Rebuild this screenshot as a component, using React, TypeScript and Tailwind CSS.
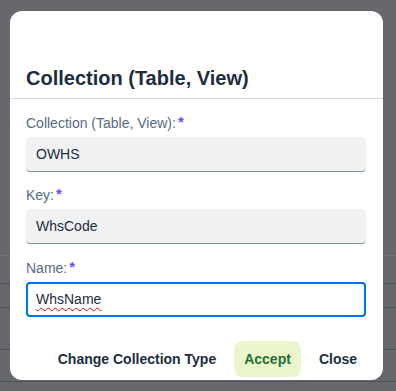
import React from 'react';

const Label: React.FC<{ text: string; className?: string }> = ({ text, className = '' }) => (
  <div className={`h-[20px] leading-[20px] text-[14px] text-[#556b82] flex items-center ${className}`}>
    <span>{text}</span>
    <span className="ml-[2px] font-bold text-[#6c4cf5] text-[15px] leading-[20px] -mt-[2px]">*</span>
  </div>
);

const ReadField: React.FC<{ value: string }> = ({ value }) => (
  <div className="mt-[4px] h-[35px] rounded-[4px] bg-[#eff1f2] border-b border-[#7d93a9] pl-[10px] flex items-center text-[14px] text-[#1d2d3e]">
    {value}
  </div>
);

export default function App() {
  return (
    <div className="relative w-[396px] h-[391px] overflow-hidden bg-[#66686b] font-['Liberation_Sans',Arial,sans-serif]">
      {/* page behind the block layer */}
      <div className="flex flex-col">
        <div className="h-[256px] border-b border-[#727478]" />
        <div className="h-[28px] border-b border-[#4d525a]" />
        <div className="h-[24px] border-b border-[#4d525a]" />
        <div className="h-[42px] border-b border-[#4d525a]" />
        <div className="h-[32px] border-b border-[#4d525a]" />
      </div>

      {/* dialog */}
      <div className="absolute left-[10px] top-[11px] w-[373px] h-[369px] bg-white rounded-[12px] overflow-hidden flex flex-col">
        <div className="pl-[16px] pt-[55px] pb-[8px] border-b border-[#d9d9d9]">
          <h1 className="text-[20px] leading-[24px] font-bold text-[#1d2d3e]">Collection (Table, View)</h1>
        </div>

        <div className="pl-[16px] pr-[17px] pt-[14px]">
          <Label text="Collection (Table, View):" />
          <ReadField value="OWHS" />

          <Label text="Key:" className="mt-[13px]" />
          <ReadField value="WhsCode" />

          <Label text="Name:" className="mt-[14px]" />
          <div className="mt-[4px] h-[35px] rounded-[4px] bg-white border-2 border-[#0070f2] pl-[8px] flex items-center text-[14px] text-[#1d2d3e]">
            <span className="underline decoration-wavy decoration-[#e00000] decoration-1 underline-offset-[3px]">WhsName</span>
          </div>
        </div>

        <div className="mt-[24px] pr-[16px] flex justify-end gap-[8px]">
          <button className="h-[36px] px-[10px] rounded-[8px] text-[14px] font-bold text-[#1d2d3e]">Change Collection Type</button>
          <button className="h-[36px] px-[10px] rounded-[8px] text-[14px] font-bold text-[#256f3a] bg-[#ebf5cb]">Accept</button>
          <button className="h-[36px] px-[10px] rounded-[8px] text-[14px] font-bold text-[#1d2d3e]">Close</button>
        </div>
      </div>
    </div>
  );
}
